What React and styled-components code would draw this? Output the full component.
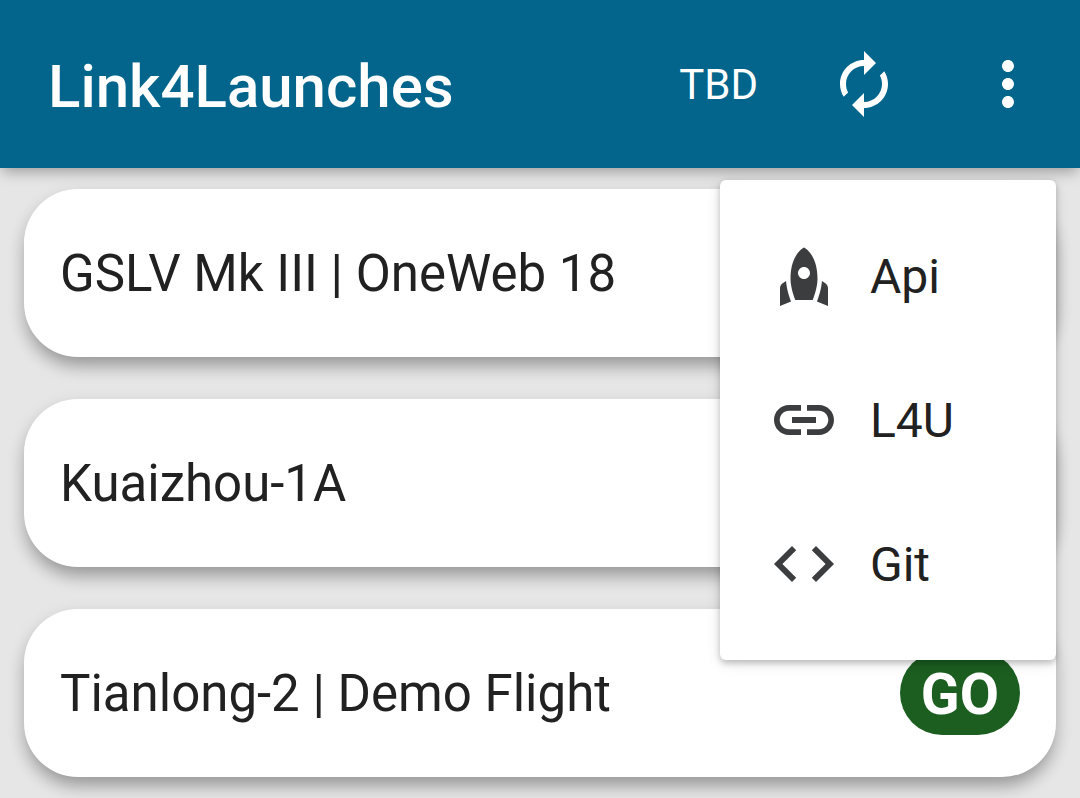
import React from "react";
import styled, { createGlobalStyle } from "styled-components";

const GlobalStyle = createGlobalStyle`
  *, *::before, *::after { box-sizing: border-box; }
  body {
    margin: 0;
    min-height: 100vh;
    background: #e6e6e6;
    color: #212121;
    font-family: Roboto, "Liberation Sans", sans-serif;
    overflow-x: hidden;
    scrollbar-width: none;
  }
`;

const AppBar = styled.header`
  position: relative;
  z-index: 1;
  display: flex;
  align-items: center;
  height: 168px;
  padding-left: 48px;
  background: #03658c;
  color: #fff;
  box-shadow: 0 6px 12px -3px rgba(0, 0, 0, 0.26), 0 6px 15px rgba(0, 0, 0, 0.08);
`;

const Title = styled.h1`
  flex: 1;
  margin: 0;
  padding-top: 6px;
  font-size: 60px;
  font-weight: 500;
  line-height: 72px;
`;

const BarButton = styled.button`
  display: flex;
  align-items: center;
  justify-content: center;
  height: 144px;
  padding: ${({ $text }) => ($text ? "2px 34px 0" : "0 36px")};
  border: 0;
  background: none;
  color: inherit;
  font-family: inherit;
  font-size: 42px;
  line-height: 48px;
  cursor: pointer;
`;

const Icon = styled.svg`
  display: block;
  flex: none;
  width: 72px;
  height: 72px;
  fill: currentColor;
`;

const Menu = styled.nav`
  position: absolute;
  top: 180px;
  right: 24px;
  width: 336px;
  padding: 24px 0;
  border-radius: 6px;
  background: #fff;
  box-shadow: 0 3px 6px rgba(0, 0, 0, 0.22), 0 3px 15px rgba(0, 0, 0, 0.1);
`;

const MenuLink = styled.a`
  display: flex;
  align-items: center;
  gap: 30px;
  height: 144px;
  padding: 0 48px;
  color: #212121;
  font-size: 48px;
  line-height: 60px;
  text-decoration: none;

  ${Icon} { color: #3b3d3f; }
`;

const MenuText = styled.span`
  padding-top: 2px;
`;

const LaunchList = styled.ul`
  display: flex;
  flex-direction: column;
  gap: 42px;
  margin: 0;
  padding: 21px 24px;
  list-style: none;
`;

const LaunchCard = styled.li`
  display: flex;
  align-items: center;
  justify-content: space-between;
  height: 168px;
  padding: 0 36px;
  border-radius: 54px;
  background: #fff;
  box-shadow: 0 12px 18px -4px rgba(0, 0, 0, 0.28), 0 6px 18px rgba(0, 0, 0, 0.12);
`;

const LaunchName = styled.h2`
  margin: 0;
  padding-top: 2px;
  font-size: 51px;
  font-weight: 400;
  line-height: 60px;
`;

const Status = styled.span`
  padding: 11px 21px 7px;
  border-radius: 42px;
  background: #1b5e20;
  color: #fff;
  font-size: 57px;
  font-weight: 700;
  line-height: 66px;
`;

const icons = {
  renew:
    "M12 6v3l4-4-4-4v3c-4.42 0-8 3.58-8 8 0 1.57.46 3.03 1.24 4.26L6.7 14.8c-.45-.83-.7-1.79-.7-2.8 0-3.31 2.69-6 6-6zm6.76 1.74L17.3 9.2c.44.84.7 1.79.7 2.8 0 3.31-2.69 6-6 6v-3l-4 4 4 4v-3c4.42 0 8-3.58 8-8 0-1.57-.46-3.03-1.24-4.26z",
  more:
    "M12 8c1.1 0 2-.9 2-2s-.9-2-2-2-2 .9-2 2 .9 2 2 2zm0 2c-1.1 0-2 .9-2 2s.9 2 2 2 2-.9 2-2-.9-2-2-2zm0 6c-1.1 0-2 .9-2 2s.9 2 2 2 2-.9 2-2-.9-2-2-2z",
  rocket:
    "M12 2.5s4.5 2.04 4.5 10.5c0 2.49-1.04 5.57-1.6 7H9.1c-.56-1.43-1.6-4.51-1.6-7C7.5 4.54 12 2.5 12 2.5zm2 8.5c0-1.1-.9-2-2-2s-2 .9-2 2 .9 2 2 2 2-.9 2-2zm-6.31 9.52c-.48-1.23-1.52-4.17-1.67-6.87l-1.13.75c-.56.38-.89 1-.89 1.67V22l3.69-1.48zM20 22v-5.93c0-.67-.33-1.29-.89-1.66l-1.13-.75c-.15 2.69-1.2 5.64-1.67 6.87L20 22z",
  link:
    "M3.9 12c0-1.71 1.39-3.1 3.1-3.1h4V7H7c-2.76 0-5 2.24-5 5s2.24 5 5 5h4v-1.9H7c-1.71 0-3.1-1.39-3.1-3.1zM8 13h8v-2H8v2zm9-6h-4v1.9h4c1.71 0 3.1 1.39 3.1 3.1s-1.39 3.1-3.1 3.1h-4V17h4c2.76 0 5-2.24 5-5s-2.24-5-5-5z",
  code:
    "M9.4 16.6 4.8 12l4.6-4.6L8 6l-6 6 6 6 1.4-1.4zm5.2 0 4.6-4.6-4.6-4.6L16 6l6 6-6 6-1.4-1.4z",
};

const Glyph = ({ name }) => (
  <Icon viewBox="0 0 24 24" aria-hidden="true">
    <path d={icons[name]} />
  </Icon>
);

const menuItems = [
  { icon: "rocket", label: "Api", href: "#api" },
  { icon: "link", label: "L4U", href: "#l4u" },
  { icon: "code", label: "Git", href: "#git" },
];

const launches = [
  { name: "GSLV Mk III | OneWeb 18" },
  { name: "Kuaizhou-1A" },
  { name: "Tianlong-2 | Demo Flight", status: "GO" },
];

export default function App() {
  return (
    <>
      <GlobalStyle />
      <AppBar>
        <Title>Link4Launches</Title>
        <BarButton type="button" $text>TBD</BarButton>
        <BarButton type="button" aria-label="Refresh">
          <Glyph name="renew" />
        </BarButton>
        <BarButton type="button" aria-label="More options" aria-expanded="true">
          <Glyph name="more" />
        </BarButton>
        <Menu aria-label="More options">
          {menuItems.map(({ icon, label, href }) => (
            <MenuLink key={label} href={href}>
              <Glyph name={icon} />
              <MenuText>{label}</MenuText>
            </MenuLink>
          ))}
        </Menu>
      </AppBar>
      <main>
        <LaunchList>
          {launches.map(({ name, status }) => (
            <LaunchCard key={name}>
              <LaunchName>{name}</LaunchName>
              {status && <Status>{status}</Status>}
            </LaunchCard>
          ))}
        </LaunchList>
      </main>
    </>
  );
}
